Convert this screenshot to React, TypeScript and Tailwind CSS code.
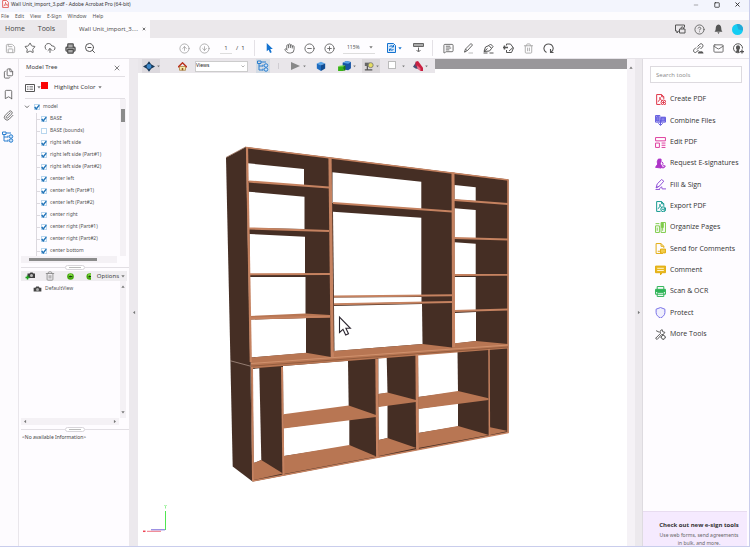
import React from "react";
import {
  Save, Star, CloudUpload, Printer, ZoomOut, CircleArrowUp, CircleArrowDown, Hand,
  CircleMinus, CirclePlus, MessageSquareText, Trash2, RotateCw, Mail, CircleHelp,
  Bookmark, Paperclip, Files, X, Minus, Square,
} from "lucide-react";

type Pts = string;

function Caret({ className = "" }: { className?: string }) {
  return (
    <svg viewBox="0 0 4 3" className={`h-[3px] w-1 shrink-0 fill-[#777] ${className}`} aria-hidden="true">
      <path d="M.3 .3h3.400L2 2.500z" />
    </svg>
  );
}

function IconButton({ label, children, className = "h-full w-5" }: { label: string; children: React.ReactNode; className?: string }) {
  return (
    <button type="button" aria-label={label} className={`flex shrink-0 items-center justify-center ${className}`}>
      {children}
    </button>
  );
}

const glyph = "size-[11px] text-[#666]";

function TitleBar() {
  return (
    <header className="flex h-3 shrink-0 items-start bg-[#f3f5fd] pl-0.5 text-[5px] text-[#333]">
      <svg viewBox="0 0 12 14" className="h-2 w-[7px]" aria-hidden="true">
        <path d="M1 1h7l3 3v9H1z" fill="#fff" stroke="#e0413f" strokeWidth="1.4" />
        <path d="M3 10c3-2 3-4 3-6 0 3 2 4 4 5-3-1-5 0-7 1z" fill="none" stroke="#d32f2f" />
      </svg>
      <h1 className="ml-0.5 text-[5px] leading-[9px]">Wall Unit_import_3.pdf - Adobe Acrobat Pro (64-bit)</h1>
      <div className="ml-auto flex h-[9px] pr-px">
        <IconButton label="Minimize" className="h-full w-[21px]"><Minus className="size-[6px] text-[#555]" /></IconButton>
        <IconButton label="Maximize" className="h-full w-[21px]"><Square className="size-[6px] text-[#222]" strokeWidth={3} /></IconButton>
        <IconButton label="Close" className="h-full w-[21px]"><X className="size-[7px] text-[#222]" strokeWidth={3} /></IconButton>
      </div>
    </header>
  );
}

function MenuBar() {
  return (
    <nav aria-label="Menu" className="flex h-2 shrink-0 items-center gap-[6px] bg-[#fdfcfe] pl-px text-[5px] leading-2 text-[#555]">
      {["File", "Edit", "View", "E-Sign", "Window", "Help"].map((m) => (
        <button type="button" key={m}>{m}</button>
      ))}
    </nav>
  );
}

function TabBar() {
  return (
    <div className="flex h-[18px] shrink-0 items-center bg-[#ebe8eb] font-['Open_Sans','Noto_Sans',sans-serif] text-[7px] text-[#444]">
      <button type="button" className="h-full w-[30px]">Home</button>
      <button type="button" className="h-full w-[37px] pr-1">Tools</button>
      <div className="flex h-full w-[83px] items-center bg-[#fdfcfe] pl-3 text-[6px]">
        <span>Wall Unit_import_3....</span>
        <button type="button" aria-label="Close tab" className="ml-1"><X className="size-1 text-[#333]" strokeWidth={4} /></button>
      </div>
      <div className="ml-auto flex h-full pr-0.5">
        <IconButton label="Share screen" className="h-full w-[19px]">
          <svg viewBox="0 0 22 20" className="h-[10px] w-[11px]" fill="none" stroke="#555" strokeWidth="2" aria-hidden="true">
            <path d="M9 14H7l-3 4v-4H1V2h18v5M9 10h11v8H9zM12 10V8c0-3 5-3 5 0v2" />
          </svg>
        </IconButton>
        <IconButton label="Help" className="h-full w-[19px]"><CircleHelp className={glyph} /></IconButton>
        <IconButton label="Notifications" className="h-full w-[19px]">
          <svg viewBox="0 0 16 18" className="h-[10px] w-[9px] fill-[#555]" aria-hidden="true">
            <path d="M8 1c-4 1-5 4-5 7 0 3-1 4-2 6h14c-1-2-2-3-2-6 0-3-1-6-5-7zM6 15h4l-2 3z" />
          </svg>
        </IconButton>
        <IconButton label="Account" className="h-full w-[19px]">
          <svg viewBox="0 0 12 12" className="size-[11px]" aria-hidden="true">
            <circle cx="6" cy="6" r="6" fill="#14cdf3" />
            <path d="M5 0a6 6 0 0 1 7 7L7 6z" fill="#23a9d6" />
          </svg>
        </IconButton>
      </div>
    </div>
  );
}

function Toolbar() {
  return (
    <div className="flex h-[21px] shrink-0 items-center border-b border-[#e6e3e8] bg-[#fefdff]">
      <IconButton label="Save"><Save className="size-[11px] text-[#aaa]" /></IconButton>
      <IconButton label="Star"><Star className="size-3 text-[#666]" /></IconButton>
      <IconButton label="Upload"><CloudUpload className="size-3 text-[#666]" /></IconButton>
      <IconButton label="Print"><Printer className="size-[11px] fill-[#aaa] text-[#4a4a4a]" strokeWidth={2.5} /></IconButton>
      <IconButton label="Find"><ZoomOut className="size-3 text-[#555]" /></IconButton>
      <div className="ml-[74px] flex h-full items-center">
        <IconButton label="Previous page"><CircleArrowUp className="size-[11px] text-[#999]" strokeWidth={1.6} /></IconButton>
        <IconButton label="Next page"><CircleArrowDown className="size-[11px] text-[#999]" strokeWidth={1.6} /></IconButton>
        <input aria-label="Page" defaultValue="1" className="ml-1.5 h-3 w-3 border-b border-[#ddd] bg-transparent text-center text-[6px] text-[#555]" />
        <span className="ml-1 w-[18px] text-[6px] text-[#444]">/&nbsp; 1</span>
      </div>
      <div className="mr-1 h-4 w-px bg-[#e4e1e6]" />
      <IconButton label="Select">
        <svg viewBox="0 0 12 18" className="h-[10px] w-[7px] fill-[#1473d0]" aria-hidden="true"><path d="M1 0v15l3.500-3 2.500 6 3-1.400-2.600-5.600H12z" /></svg>
      </IconButton>
      <IconButton label="Pan"><Hand className="size-[11px] text-[#666]" /></IconButton>
      <IconButton label="Zoom out"><CircleMinus className={glyph} /></IconButton>
      <IconButton label="Zoom in"><CirclePlus className={glyph} /></IconButton>
      <div className="relative ml-1 flex h-[11px] w-8 items-center border-b border-[#ddd]">
        <select aria-label="Zoom level" className="w-full appearance-none bg-transparent pl-1 text-[5px] text-[#555]"><option>115%</option></select>
        <Caret className="pointer-events-none absolute right-0.5" />
      </div>
      <button type="button" aria-label="Fit page" className="ml-3 flex w-[15px] items-center gap-0.5">
        <svg viewBox="0 0 18 20" className="h-[10px] w-[9px] shrink-0" fill="none" stroke="#1473d0" strokeWidth="2" aria-hidden="true">
          <path d="M1 1h12l4 4v14H1z" fill="#d9e9fa" /><path d="M5 8c1-3 5-3 7-1M13 4v4H9M13 12c-1 3-5 3-7 1M5 16v-4h4" />
        </svg>
        <Caret className="fill-[#1473d0]" />
      </button>
      <IconButton label="Reading mode" className="ml-[6px] h-full w-5">
        <svg viewBox="0 0 22 20" className="h-[10px] w-[11px]" fill="none" stroke="#666" strokeWidth="2" aria-hidden="true">
          <path d="M1 1h20v6H1z" fill="#aaa" /><path d="M11 9v8M7 14l4 4 4-4" />
        </svg>
      </IconButton>
      <div className="mx-1 h-4 w-px bg-[#e4e1e6]" />
      <div className="ml-px flex h-full items-center">
        <IconButton label="Comment"><MessageSquareText className={glyph} /></IconButton>
        <IconButton label="Highlight">
          <svg viewBox="0 0 22 22" className="size-[11px]" fill="none" stroke="#666" strokeWidth="2" aria-hidden="true"><path d="M3 18l2-6L16 1l3 3L9 15zM5 12l4 4M3 18l3-1" /><path d="M11 20h9" stroke="#bbb" /></svg>
        </IconButton>
        <IconButton label="Sign">
          <svg viewBox="0 0 22 22" className="size-[11px]" fill="none" stroke="#555" strokeWidth="2" aria-hidden="true"><path d="M2 17l3-9 7-3 5 6-4 5zM2 17l7-6M12 5l3-3 5 5-3 4M1 20h8M13 20h8" /></svg>
        </IconButton>
        <IconButton label="Stamp">
          <svg viewBox="0 0 22 22" className="size-[11px]" fill="none" stroke="#555" strokeWidth="2" aria-hidden="true"><path d="M7 5V2h8l6 8-4 9H7v-5M12 16l8-7" /><path d="M0 9h10M3 5v8" strokeWidth="3" /></svg>
        </IconButton>
        <IconButton label="Delete"><Trash2 className="size-[11px] text-[#aaa]" /></IconButton>
        <IconButton label="Rotate" className="h-full w-[21px]">
          <svg viewBox="0 0 22 22" className="size-[11px]" fill="none" stroke="#555" strokeWidth="2.200" aria-hidden="true"><path d="M7 19C-2 14 2 2 11 2s13 11 5 16M15 12v7h6" /></svg>
        </IconButton>
      </div>
      <div className="ml-auto flex h-full pr-px">
        <IconButton label="Share link">
          <svg viewBox="0 0 22 22" className="size-[11px]" fill="none" stroke="#555" strokeWidth="2" aria-hidden="true"><path d="M8 13l7-7M6 9l-4 4c-3 4 2 8 5 5l4-4M9 7l4-4c4-4 9 1 6 5l-4 4" /><path d="M10 21c0-4 3-5 5-4 3-2 6 1 6 4z" fill="#555" stroke="none" /></svg>
        </IconButton>
        <IconButton label="Mail"><Mail className={glyph} /></IconButton>
        <IconButton label="Share with people">
          <svg viewBox="0 0 22 22" className="size-[11px]" aria-hidden="true"><path d="M13 19A9 9 0 1 1 19 11" fill="none" stroke="#555" strokeWidth="2" /><path d="M6 9c0-6 8-6 8 0 0 3-1 3-2 5l1 5H8l-3-3c2-1 3-1 3-2-1-1-2-2-2-5z" fill="#555" /><path d="M18 13v8M14 17h8" stroke="#555" strokeWidth="2.500" /></svg>
        </IconButton>
      </div>
    </div>
  );
}

function ModelTreeIcon({ className = "" }: { className?: string }) {
  return (
    <svg viewBox="0 0 24 24" className={`size-3 ${className}`} fill="none" stroke="#2a7fcf" strokeWidth="2" aria-hidden="true">
      <path d="M1 2h7v5H1zM4 7v13h8M4 12h8" />
      <path d="M8 4h10" /><circle cx="18" cy="11" r="3.500" fill="#cfe4fa" /><circle cx="18" cy="19" r="3.500" fill="#cfe4fa" /><path d="M12 9v4M12 17v4" />
    </svg>
  );
}

function Rail() {
  return (
    <nav aria-label="Side panels" className="flex w-[19px] shrink-0 flex-col border-r border-[#e9e6eb] bg-[#fdfbfe] pr-0.5 pt-[3px]">
      <IconButton label="Pages" className="h-[22px] w-full">
        <Files className="size-[11px] text-[#666]" />
      </IconButton>
      <IconButton label="Bookmarks" className="h-[21px] w-full"><Bookmark className="size-[11px] text-[#666]" /></IconButton>
      <IconButton label="Attachments" className="h-[21px] w-full"><Paperclip className="size-[11px] text-[#666]" /></IconButton>
      <IconButton label="Model tree" className="h-[22px] w-full"><ModelTreeIcon /></IconButton>
    </nav>
  );
}

const treeItems: [string, boolean][] = [
  ["BASE", true], ["BASE (bounds)", false], ["right left side", true], ["right left side (Part#1)", true],
  ["right left side (Part#2)", true], ["center left", true], ["center left (Part#1)", true],
  ["center left (Part#2)", true], ["center right", true], ["center right (Part#1)", true],
  ["center right (Part#2)", true], ["center bottom", true],
];

function TreeCheck({ label, checked }: { label: string; checked: boolean }) {
  return (
    <label className="flex items-center gap-[3px]">
      <span className="relative size-[6px] shrink-0">
        <input type="checkbox" defaultChecked={checked} className="peer block size-[6px] appearance-none border border-[#b9d6ee] bg-white" />
        <svg viewBox="0 0 8 8" className="pointer-events-none absolute inset-0 hidden size-[6px] peer-checked:block" fill="none" stroke="#2374b8" strokeWidth="2" aria-hidden="true">
          <path d="M1 4l2 2.500L7 1.500" />
        </svg>
      </span>
      <span className="whitespace-nowrap">{label}</span>
    </label>
  );
}

function Splitter() {
  return (
    <div className="flex h-2 shrink-0 items-center">
      <div className="h-px flex-1 bg-[#e2dfe4]" />
      <div className="flex h-[5px] w-5 items-center justify-center rounded-full border border-[#d8d5da] bg-white"><div className="h-px w-3 bg-[#bbb]" /></div>
      <div className="h-px flex-1 bg-[#e2dfe4]" />
    </div>
  );
}

function GreenDot({ half = false }: { half?: boolean }) {
  return (
    <svg viewBox={half ? "0 0 5 8" : "0 0 8 8"} className={half ? "h-[7px] w-[5px]" : "size-[7px]"} aria-hidden="true">
      <circle cx="4" cy="4" r="3.800" fill="#45a80e" /><circle cx="4" cy="3" r="2.200" fill="#7fd83e" />
      <path d="M2 4l2-1.500v3z M4 3.500h2v1H4z" fill="#17430a" />
    </svg>
  );
}

function ModelPanel() {
  return (
    <aside className="flex w-[110px] shrink-0 flex-col bg-[#fefcff] pl-0.5 text-[5px] text-[#555]">
      <div className="mx-1 flex h-[18px] items-center border-b border-[#e2dfe4]">
        <h2 className="pl-px text-[6px] text-[#444]">Model Tree</h2>
        <button type="button" aria-label="Close panel" className="ml-auto mr-1"><X className="size-2 text-[#444]" /></button>
      </div>
      <div className="mx-1 flex h-[22px] items-center border-b border-[#e2dfe4]">
        <button type="button" aria-label="Tree options" className="flex items-center gap-0.5">
          <svg viewBox="0 0 20 16" className="h-2 w-[10px]" fill="none" stroke="#555" strokeWidth="2" aria-hidden="true"><path d="M1 1h18v14H1z" /><path d="M4 5h3M9 5h7M4 8h3M9 8h7M4 11h3M9 11h7" strokeWidth="1.200" /></svg>
          <Caret />
        </button>
        <button type="button" className="flex items-center font-['Open_Sans','Noto_Sans',sans-serif] text-[6px] text-[#333]">
          <span className="mb-1 mr-1.5 size-[7px] bg-[#fa0505]" />Highlight Color<Caret className="ml-0.5" />
        </button>
      </div>
      <div className="flex h-[157px] shrink-0 overflow-hidden">
        <div className="flex-1 overflow-hidden pt-0.5">
          <div className="flex h-3 items-center gap-1 pl-[3px]">
            <svg viewBox="0 0 8 6" className="h-1 w-[6px]" fill="none" stroke="#555" strokeWidth="1.300" aria-hidden="true"><path d="M1 1l3 3 3-3" /></svg>
            <TreeCheck label="model" checked />
          </div>
          <ul className="ml-[15px] border-l border-[#dcd9df]">
            {treeItems.map(([label, on]) => (
              <li key={label} className="flex h-3 items-center gap-px">
                <span className="h-px w-[3px] bg-[#dcd9df]" /><TreeCheck label={label} checked={on} />
              </li>
            ))}
          </ul>
        </div>
        <div className="mr-[3px] w-[6px] bg-[#f4f1f5] px-px pt-[10px]"><div className="h-[13px] bg-[#8b8b8b]" /></div>
      </div>
      <div className="mr-3 flex h-[7px] shrink-0 items-center bg-[#f4f1f5] pl-2"><div className="h-[3px] w-[68px] bg-[#8b8b8b]" /></div>
      <Splitter />
      <div className="mr-0.5 flex h-[10px] shrink-0 items-center bg-[#efedf0] pl-1 pr-0.5">
        <button type="button" aria-label="Add view">
          <svg viewBox="0 0 20 16" className="h-2 w-[11px]" aria-hidden="true"><path d="M4 3h4l2-2h4l2 2h3v9H4z" fill="#3e3e3e" /><circle cx="12" cy="7" r="3" fill="#bbb" /><path d="M0 11h8M4 7v8" stroke="#1ea51e" strokeWidth="3" /></svg>
        </button>
        <button type="button" aria-label="Delete view" className="ml-[9px]"><Trash2 className="size-[10px] text-[#888]" /></button>
        <button type="button" aria-label="Previous view" className="ml-3"><GreenDot /></button>
        <button type="button" aria-label="Next view" className="ml-3"><GreenDot half /></button>
        <button type="button" className="ml-auto flex items-center gap-0.5 font-['Open_Sans','Noto_Sans',sans-serif] text-[6px] leading-2 text-[#333]">Options<Caret /></button>
      </div>
      <div className="flex min-h-0 flex-1 flex-col">
        <div className="flex h-[137px] shrink-0">
          <div className="flex flex-1 items-start gap-[3px] pl-3 pt-[3px]">
            <svg viewBox="0 0 20 14" className="mt-0.5 h-[6px] w-[9px]" aria-hidden="true"><path d="M1 4h4l2-3h6l2 3h4v9H1z" fill="#444" /><circle cx="10" cy="8" r="3.500" fill="#aaa" /></svg>
            <span className="leading-2">DefaultView</span>
          </div>
          <div className="mr-[3px] flex w-[6px] flex-col items-center justify-between bg-[#f4f1f5] py-1"><Caret className="rotate-180" /><Caret /></div>
        </div>
        <div className="mr-2.5 flex h-[7px] shrink-0 items-center justify-between bg-[#f4f1f5] px-0.5"><Caret className="rotate-90" /><Caret className="-rotate-90" /></div>
        <Splitter />
        <p className="pl-px leading-2 text-[#444]">&lt;No available Information&gt;</p>
      </div>
    </aside>
  );
}

function Cube({ color, top, side }: { color: string; top: string; side: string }) {
  return (
    <svg viewBox="0 0 12 12" className="size-[10px]" aria-hidden="true">
      <path d="M1 3l5-2 5 2-5 2z" fill={top} /><path d="M1 3l5 2v7L1 9z" fill={color} /><path d="M11 3L6 5v7l5-3z" fill={side} />
    </svg>
  );
}

function ViewBar() {
  return (
    <div className="flex h-[14px] w-[297px] shrink-0 items-center bg-[#e9e6ea]">
      <button type="button" aria-label="Rotate model" className="ml-1 flex h-full w-[18px] items-center justify-center gap-0.5 bg-[#dcd9de]">
        <svg viewBox="0 0 14 12" className="h-[11px] w-3" aria-hidden="true"><path d="M7 0l2.500 3.500L14 6l-4.500 2.500L7 12 4.500 8.500 0 6l4.500-2.500z" fill="#17395a" /><circle cx="7" cy="6" r="2.800" fill="#3c86c8" /></svg>
        <Caret className="w-[3px]" />
      </button>
      <button type="button" aria-label="Home view" className="ml-[18px]">
        <svg viewBox="0 0 12 12" className="size-[9px]" aria-hidden="true"><path d="M2 6h8v5H2z" fill="#f8e8a5" stroke="#a5793e" /><path d="M0 7l6-6 6 6" fill="none" stroke="#b92c17" strokeWidth="1.800" /><path d="M5 8h2v3H5z" fill="#8a5a26" /></svg>
      </button>
      <div className="relative ml-2 flex h-[11px] w-[53px] items-center border border-[#ccc] bg-white">
        <select aria-label="Views" className="w-full appearance-none bg-transparent text-[5px] text-[#222]"><option>Views</option></select>
        <svg viewBox="0 0 8 6" className="pointer-events-none absolute right-0.5 h-[3px] w-1" fill="none" stroke="#999" strokeWidth="1.500" aria-hidden="true"><path d="M1 1l3 3 3-3" /></svg>
      </div>
      <button type="button" aria-label="Toggle model tree" className="ml-2 flex h-full w-[14px] items-center justify-center bg-[#d3dbe4]"><ModelTreeIcon /></button>
      <div className="ml-2 h-[6px] w-px bg-[#d0cdd2]" />
      <button type="button" aria-label="Play" className="ml-3 flex items-center gap-[3px]">
        <svg viewBox="0 0 9 8" className="h-2 w-[9px] fill-[#888]" aria-hidden="true"><path d="M0 0l9 4-9 4z" /></svg><Caret className="w-[3px]" />
      </button>
      <button type="button" aria-label="Projection" className="ml-2.5"><Cube color="#1d6cc0" top="#59a5e8" side="#104c92" /></button>
      <button type="button" aria-label="Render mode" className="ml-3 flex items-center gap-0.5">
        <svg viewBox="0 0 14 12" className="h-[11px] w-[13px]" aria-hidden="true"><path d="M5 2l4-2 5 1v7l-3 2-6-1z" fill="#1553a4" /><path d="M5 2l4-2 5 1-3 2z" fill="#5aa2e6" /><path d="M0 6l6-1v6H0z" fill="#37b315" /><path d="M0 6l2-1h6L6 6z" fill="#8be566" /><path d="M6 6l2-1v5l-2 1z" fill="#1d7c0a" /></svg>
        <Caret className="w-[3px]" />
      </button>
      <button type="button" aria-label="Lighting" className="ml-[6px] flex h-full w-[18px] items-center justify-center gap-0.5 bg-[#dad7da]">
        <svg viewBox="0 0 12 12" className="size-[10px]" aria-hidden="true"><path d="M1 2h6v4H1z" fill="#666" /><circle cx="8" cy="5" r="3" fill="#e4dd62" stroke="#777" /><path d="M4 6v4M1 10.500h9" stroke="#555" strokeWidth="1.500" /></svg>
        <Caret className="w-[3px]" />
      </button>
      <button type="button" aria-label="Background color" className="ml-2 flex items-center gap-1.5"><span className="mb-0.5 size-2 border border-[#bbb] bg-white" /><Caret className="w-[3px]" /></button>
      <button type="button" aria-label="Cross section" className="ml-2 flex items-center gap-0.5">
        <svg viewBox="0 0 12 12" className="size-[10px]" aria-hidden="true"><path d="M0 7l4-6 3 2v7L3 9z" fill="#444e72" /><path d="M3 1l3-1 6 8v4H9L3 5z" fill="#c92041" /><path d="M5 5l4 4v3L5 9z" fill="#e86b86" /></svg>
        <Caret className="w-[3px]" />
      </button>
    </div>
  );
}

const shell = "246,147 508.500,179.500 508.500,432.500 252.500,481.500";

/* See-through parts of the unit, bay by bay from the top left */
const openings: Pts[] = [
  "248,163.300 304,169 304,186 248,181",
  "248.500,191.700 304.500,196.700 304.500,229 249,228",
  "249.500,234 305,236.700 305,274 250,274",
  "250,277 305.500,277 305.500,315 250,317",
  "250.500,319.500 306,318 306,353 251,357.500",
  "332.500,172.300 421.300,181.700 421.300,209 332.500,203",
  "333,211.700 421.300,217.700 421.300,296 334,297",
  "334,297.500 421.500,297 421.500,302 334,304",
  "334,306 422,304 422.500,344 334.500,351",
  "454.500,185 475.700,187.300 475.700,201 454.500,199.500",
  "454.500,208.300 475.700,210 475.700,239 454.500,238",
  "454.500,242.300 475.700,243.700 475.700,275 454.500,275",
  "454.500,277 475.700,277 475.700,310 454.500,310.500",
  "455,313 476,312 476,341 455,343.500",
  "252.500,369 259.300,368.300 261.300,460 253.700,463",
  "283,366 348,360.700 348.700,408 283.300,415",
  "283.500,428 349.300,419.300 349.300,446 284,456",
  "378.300,358.300 386.700,357.700 387.500,393 378.300,394",
  "378.300,406.700 387.500,404.700 387.500,438 378.700,440",
  "418,354 457.500,351 458,392 418.300,397",
  "418.300,408.700 458,403 458,426.500 418.300,433",
];

/* Lit board surfaces: shelf tops and floors */
const boards: Pts[] = [
  "250,316 305,313.500 330,315 330,317.500 250,319.500",
  "250.700,357.500 306,352.700 331,357 334,351 422.700,344 452,347.500 455,343.300 476,341 508,344 508,348.500 250.700,368.500",
  "253.700,463 261.300,460 283,473.500 253.700,480",
  "283.300,414.300 348.700,405.500 376,415 376,417 283.300,428.500",
  "284,456 349.300,445 376.500,456.500 284,474",
  "378.300,394 387.500,392.500 416,400 416,402 378.300,407",
  "378.700,440 387.500,438 416.500,448 379,456",
  "418.300,397 458,391 488.500,398.300 488.500,400 418.300,409",
  "418.300,433 458,426 489,435 418.300,448",
  "490,427.300 508,431 490,435",
];

/* Front edges of boards as [x1, y1, x2, y2, width] */
const edges: [number, number, number, number, number][] = [
  [246, 147.500, 508.500, 180, 1.6],
  [249, 181.500, 329, 187.500, 2.2],
  [249, 228.500, 329, 231, 2.2],
  [250, 274.200, 330, 274, 2],
  [250, 318.300, 330, 316.500, 2],
  [333, 203, 452, 211.500, 2],
  [334, 296.500, 452, 295.300, 2],
  [334, 304.200, 452, 302, 2],
  [454, 200, 508, 204, 1.8],
  [454, 238, 508, 239.500, 1.8],
  [454, 275, 508, 274.800, 1.8],
  [454, 311, 508, 309.500, 2.2],
  [247, 148, 250.800, 362, 2.2],
  [252, 366, 253, 481, 2],
  [330, 158, 332.300, 357, 3.2],
  [453, 172.500, 453.600, 347, 3],
  [508, 180, 508, 433, 1.6],
  [282, 367, 283.400, 475, 2],
  [376.700, 359, 377.500, 457, 2.8],
  [416.800, 354, 417.500, 449, 2.8],
  [489, 348, 489.400, 436, 1.5],
  [252.500, 481, 508.500, 432.500, 1.6],
];

function WallUnit() {
  return (
    <svg viewBox="138 73 489 473" preserveAspectRatio="xMidYMid meet" className="min-h-0 w-full flex-1" role="img" aria-label="3D wall unit model">
      <polygon points="226,157.700 246,147 252.500,481.500 232.700,466.500" fill="#452e24" />
      <polygon points={shell} fill="#452e24" />
      <g fill="#fff">{openings.map((p) => <polygon key={p} points={p} />)}</g>
      <g fill="#b87653">{boards.map((p) => <polygon key={p} points={p} />)}</g>
      <g stroke="#c58260">
        {edges.map(([x1, y1, x2, y2, w]) => <line key={`${x1}-${y1}`} x1={x1} y1={y1} x2={x2} y2={y2} strokeWidth={w} />)}
      </g>
      <path d="M250.700 366.200L508 347" fill="none" stroke="#8a5539" strokeWidth=".8" />
      <path d="M230 360.700l20.700 5.500" fill="none" stroke="#b59c90" strokeWidth=".7" />
      <path d="M226 157.500L246 146.800" stroke="#8a5a44" strokeWidth=".7" />
      <path d="M251 363.500L508 345" stroke="#d69874" strokeWidth=".8" />
      <path d="M339.500 317v15.500l3.500-3.200 2.700 5.700 2.800-1.300-2.600-5.400h4.500z" fill="#fff" stroke="#2c2630" strokeWidth="1.100" />
      <path d="M165.500 511v19" stroke="#51e651" /><path d="M164.500 505l1 1.500 1-1.500m-1 1.500v2" stroke="#8ff08f" fill="none" />
      <path d="M151 529.800h14" stroke="#7263d8" /><path d="M147 531.300h14" stroke="#ee7383" /><path d="M143 531.300h2.500" stroke="#ee4353" strokeWidth="1.500" />
    </svg>
  );
}

function Viewer() {
  return (
    <main className="flex min-w-0 flex-1">
      <div className="flex w-[9px] shrink-0 items-center justify-center bg-[#ece9ed]">
        <button type="button" aria-label="Collapse left panel" className="mt-5"><Caret className="rotate-90" /></button>
      </div>
      <div className="flex min-w-0 flex-1 flex-col bg-white">
        <div className="flex shrink-0 items-start"><ViewBar /><div className="h-[10px] flex-1 bg-[#99979a]" /></div>
        <WallUnit />
      </div>
      <div className="flex w-2 shrink-0 flex-col items-center justify-between bg-[#f5f2f6] pb-1 pt-[7px]"><Caret className="rotate-180" /></div>
      <div className="flex w-2 shrink-0 items-center justify-center border-r border-[#dedbe0] bg-[#ece9ed]">
        <button type="button" aria-label="Collapse right panel" className="mt-5"><Caret className="-rotate-90" /></button>
      </div>
    </main>
  );
}

const page = "M3 1h9l4 4v4M10 19H3V1M12 1v4h4";
const tools: [string, string, React.ReactNode][] = [
  ["Create PDF", "#df3447", <><path d={page} /><path d="M5 14c4-2 4-5 4-8 0 4 2 5 4 6" /><circle cx="15.500" cy="15.500" r="4.500" /><path d="M15.500 13v5M13 15.500h5" /></>],
  ["Combine Files", "#6058df", <><path d="M1 1h8v12H1zM11 4h8v9h-8z" /><path d="M3 3h4v8H3zM11 5h7v6h-7z" fill="#8a84ea" /><path d="M10 9v9M6 15l4 4 4-4" /></>],
  ["Edit PDF", "#df3f9f", <><path d="M1 1h18v6H1zM1 11h7v8H1zM12 11h7M12 15h7M12 19h7" /></>],
  ["Request E-signatures", "#ae35c8", <><path d="M6 2h5v5l-2 4H5L4 7zM1 17l4-6h5l3 5-3 2z" fill="#ae35c8" /><path d="M10 18l8-2M13 12l6 3-5 4M13 7l2 4" /></>],
  ["Fill & Sign", "#9152d8", <><path d="M2 16L4 9 12 1l4 3-8 9zM2 16l6-3M8 18l4-4 1 4h7M1 19h8" /></>],
  ["Export PDF", "#159a91", <><path d={page} /><path d="M5 14c4-2 4-5 4-8 0 4 2 5 4 6" /><circle cx="15" cy="15" r="4.500" /><path d="M12 15h6M16 12l3 3-3 3" /></>],
  ["Organize Pages", "#7ecb4a", <><path d="M1 7h7v12H1zM11 1h8v18h-8zM1 3h7M14 4v12M4 10v6" /><path d="M12 2h3v8h-3z" fill="#7ecb4a" /></>],
  ["Send for Comments", "#e2ac11", <><path d="M2 1h9l5 5v3M2 1v18h9M11 1v5h5M5 15h4" /><path d="M10 11h9v7h-4l-3 2v-2h-2z" fill="#f2cd4c" /></>],
  ["Comment", "#e2ac11", <><path d="M1 2h18v12h-6l-3 4v-4H1z" fill="#e8b820" /><path d="M4 6h12M4 10h12" stroke="#fff5cf" /></>],
  ["Scan & OCR", "#2fb457", <><path d="M4 6V1h12v5M1 6h18v9H1zM4 12h12v7H4z" /><path d="M2 7h16v3H2z" fill="#2fb457" /></>],
  ["Protect", "#7770e8", <path d="M10 1l8 3v6c0 5-4 8-8 10-4-2-8-5-8-10V4z" fill="#f0effd" />],
  ["More Tools", "#5c5c5c", <><path d="M1 17L10 8 9 4l4-3 1 4 4 1-3 4h-3l-8 9zM2 3l6 3" /><circle cx="15" cy="15" r="3.500" fill="#fff" /><path d="M15 10v2M15 18v2M10 15h2M18 15h2" /></>],
];

function ToolsPanel() {
  return (
    <aside className="flex w-[106px] shrink-0 flex-col bg-[#fefcff] font-['Open_Sans','Noto_Sans',sans-serif]">
      <input type="search" aria-label="Search tools" placeholder="Search tools" className="mx-[7px] mt-[7px] h-[17px] shrink-0 border border-[#dddadf] bg-white px-[5px] text-[6px] placeholder:text-[#888]" />
      <ul className="mt-[6px] flex h-64 shrink-0 flex-col text-[7px] text-[#333]">
        {tools.map(([label, color, art]) => (
          <li key={label} className="flex flex-1 items-center pl-3">
            <button type="button" className="flex items-center gap-1 whitespace-nowrap">
              <svg viewBox="0 0 20 20" className="size-[11px] shrink-0" fill="none" stroke={color} strokeWidth="1.800" aria-hidden="true">{art}</svg>
              {label}
            </button>
          </li>
        ))}
      </ul>
      <section className="mr-0.5 mt-auto h-[35px] shrink-0 border-t border-[#e8dcf0] bg-[#f5eafe] pl-2 pt-2 text-center text-[5px] leading-2 text-[#666]">
        <h2 className="text-[6px] font-bold leading-[11px] text-[#333]">Check out new e-sign tools</h2>
        <p className="font-['Noto_Sans',sans-serif]">Use web forms, send agreements<br />in bulk, and more.</p>
      </section>
    </aside>
  );
}

export default function App() {
  return (
    <div className="flex h-screen flex-col overflow-hidden border-b border-r border-[#c9cdec] bg-white font-['Noto_Sans','Open_Sans',sans-serif]">
      <TitleBar />
      <MenuBar />
      <TabBar />
      <Toolbar />
      <div className="flex min-h-0 flex-1">
        <Rail />
        <ModelPanel />
        <Viewer />
        <ToolsPanel />
      </div>
    </div>
  );
}
